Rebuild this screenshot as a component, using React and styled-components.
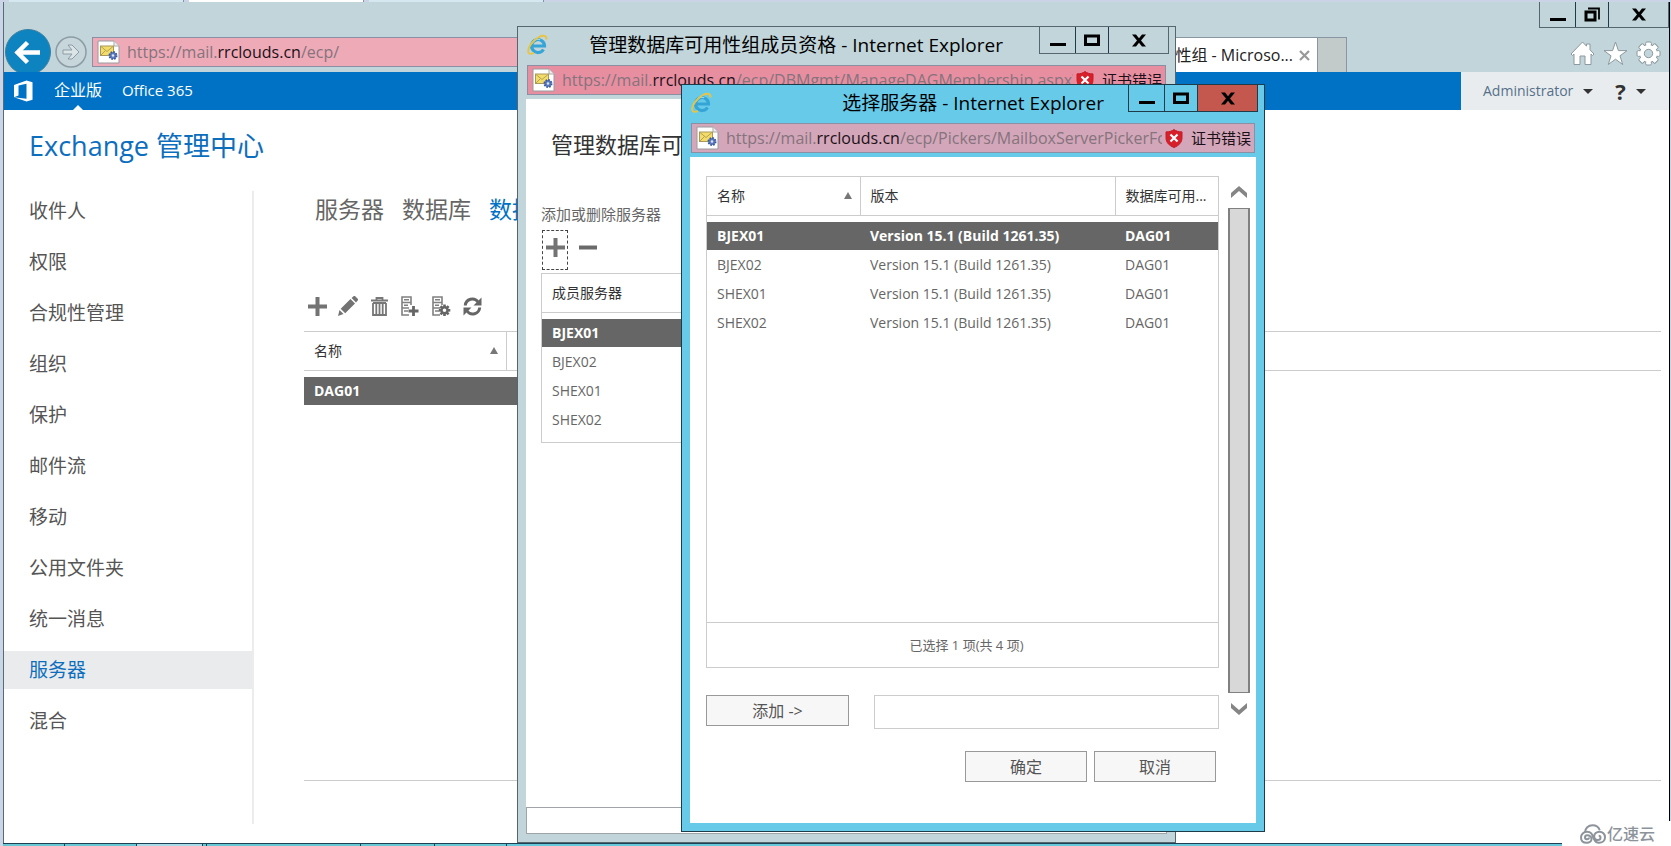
import styled, { createGlobalStyle, css } from "styled-components";

const GlobalStyle = createGlobalStyle`
  * {
    box-sizing: border-box;
  }
  body {
    margin: 0;
    font-family: "Open Sans", "Noto Sans CJK SC", sans-serif;
    color: #666;
    background: #fff;
  }
  button {
    font-family: inherit;
    margin: 0;
    padding: 0;
    border: 0;
    background: none;
    color: inherit;
  }
  svg {
    display: block;
    flex: none;
  }
`;

/* ---------- desktop and main browser window ---------- */

const Desktop = styled.div`
  position: relative;
  display: flex;
  flex-direction: column;
  min-height: 100vh;
  overflow: hidden;
  background: #cbd5e8;
`;
const TopEdge = styled.div`
  display: flex;
  gap: 5px;
  height: 2px;
  padding-left: 9px;
  background: #cbd3e6;
`;
const EdgeTab = styled.div`
  width: 175px;
  background: ${(p) => (p.$active ? "#fff" : "#d5e8f1")};
  border-right: 1px solid #8494a4;
`;
const Browser = styled.div`
  flex: 1;
  display: flex;
  flex-direction: column;
  margin-left: 3px;
  margin-right: 1px;
  border-left: 1px solid #5a6b78;
  border-right: 1px solid #000;
  background: #fff;
`;
const BrowserHead = styled.header`
  display: flex;
  align-items: flex-end;
  height: 70px;
  padding-left: 1px;
  background: #c2d5da;
`;
const BackButton = styled.button`
  width: 46px;
  height: 43px;
  overflow: hidden;
`;
const ForwardButton = styled.button`
  width: 32px;
  height: 32px;
  margin: 0 5px 4px 4px;
`;
const AddressSlot = styled.div`
  flex: 1;
  padding-bottom: 5px;
`;
const Tab = styled.div`
  display: flex;
  align-items: center;
  justify-content: flex-end;
  gap: 6px;
  width: 220px;
  height: 35px;
  padding-right: 7px;
  border-top: 1px solid #8796a0;
  background: #fff;
  color: #222;
  font-size: 16px;
  line-height: 20px;
  white-space: nowrap;
`;
const NewTab = styled.button`
  width: 30px;
  height: 35px;
  border: 1px solid #8796a0;
  border-bottom: 0;
  background: #c3caca;
`;
const HeadRight = styled.div`
  display: flex;
  flex-direction: column;
  align-items: flex-end;
  justify-content: space-between;
  width: 322px;
  height: 70px;
`;
const HeadTools = styled.div`
  display: flex;
  gap: 8px;
  padding: 0 8px 6px 0;
`;

/* ---------- window parts ---------- */

const Controls = styled.div`
  display: flex;
  height: ${(p) => p.$height || 27}px;
  border: 1px solid ${(p) => p.$line};
  border-top: 0;
`;
const ControlButton = styled.button`
  display: flex;
  align-items: center;
  justify-content: center;
  width: ${(p) => p.$width}px;
  background: ${(p) => p.$fill || "transparent"};

  & + & {
    border-left: 1px solid ${(p) => p.$line};
  }
`;
const AddressBar = styled.div`
  display: flex;
  align-items: center;
  height: 30px;
  padding: 0 3px 0 4px;
  border: 1px solid #8b8fa3;
  background: ${(p) => p.$fill};
  white-space: nowrap;
`;
const Url = styled.div`
  flex: 1;
  min-width: 0;
  overflow: hidden;
  margin-left: 7px;
  font-size: 16px;
  line-height: 24px;
  color: #85737d;

  b {
    font-weight: 400;
    color: #1c1018;
  }
`;
const CertError = styled.div`
  display: flex;
  align-items: center;
  gap: 8px;
  margin-left: 3px;
  color: #1c1018;
  font-size: 15px;
  line-height: 20px;
`;

const Popup = styled.section`
  position: absolute;
  left: ${(p) => p.$left}px;
  top: ${(p) => p.$top}px;
  display: flex;
  flex-direction: column;
  width: ${(p) => p.$width}px;
  height: ${(p) => p.$height}px;
  padding: 0 8px 8px;
  border: 1px solid ${(p) => p.$line};
  background: ${(p) => p.$fill};
`;
const PopupHead = styled.header`
  display: flex;
  align-items: flex-start;
  height: 38px;
  padding-right: 6px;
  margin-right: -8px;
`;
const PopupIcon = styled.div`
  padding: 7px 0 0 1px;
`;
const PopupTitle = styled.h2`
  flex: 1;
  margin: 0;
  padding: 5px ${(p) => p.$indent}px 0 0;
  color: #000;
  font-size: 19px;
  font-weight: 400;
  line-height: 26px;
  text-align: right;
  white-space: nowrap;
`;
const PopupAddress = styled.div`
  padding: 0 1px;
`;
const PopupBody = styled.div`
  flex: 1;
  display: flex;
  flex-direction: column;
  margin-top: 4px;
  overflow: hidden;
  background: #fff;
`;

/* ---------- Exchange admin page ---------- */

const SuiteBar = styled.nav`
  display: flex;
  align-items: center;
  height: 38px;
  padding-left: 10px;
  background: #0072c6;
`;
const SuiteLink = styled.a`
  position: relative;
  margin-left: 20px;
  padding-bottom: 2px;
  color: #fff;
  font-size: ${(p) => (p.$latin ? 15 : 16)}px;
  line-height: 36px;
  text-decoration: none;

  ${(p) =>
    p.$active &&
    css`
      &::after {
        content: "";
        position: absolute;
        left: 50%;
        bottom: 0;
        margin-left: -5px;
        border: 5px solid transparent;
        border-top: 0;
        border-bottom-color: #fff;
      }
    `}
`;
const SuiteUser = styled.div`
  display: flex;
  align-items: center;
  gap: 22px;
  width: 208px;
  height: 38px;
  margin-left: auto;
  padding-left: 22px;
  background: #e9ecee;
`;
const UserButton = styled.button`
  display: flex;
  align-items: center;
  gap: 10px;
  color: #55708a;
  font-size: 14px;
  line-height: 20px;
`;
const HelpMark = styled.span`
  color: #333;
  font-size: 22px;
  font-weight: 700;
  line-height: 24px;
`;
const Caret = styled.span`
  border: 5px solid transparent;
  border-top-color: #333;
  border-bottom: 0;
`;
const Page = styled.main`
  flex: 1;
  display: flex;
  flex-direction: column;
`;
const PageTitle = styled.h1`
  margin: 0;
  padding: 18px 0 0 25px;
  color: #0e6ebe;
  font-size: 27px;
  font-weight: 400;
  line-height: 36px;
  white-space: nowrap;
`;
const Columns = styled.div`
  flex: 1;
  display: flex;
  padding: 27px 8px 19px 0;
`;
const SideNav = styled.nav`
  display: flex;
  flex-direction: column;
  gap: 13px;
  width: 250px;
  padding-top: 1px;
  border-right: 2px solid #ececec;
`;
const SideLink = styled.a`
  padding-left: 25px;
  background: ${(p) => (p.$active ? "#e9ebec" : "transparent")};
  color: ${(p) => (p.$active ? "#0e6ebe" : "#555")};
  font-size: 19px;
  line-height: 38px;
  text-decoration: none;
`;
const Content = styled.div`
  flex: 1;
  display: flex;
  flex-direction: column;
  margin: 0 0 43px 50px;
  border-bottom: 1px solid #ccc;
`;
const Pivot = styled.div`
  display: flex;
  gap: 18px;
  padding-left: 11px;
`;
const PivotLink = styled.a`
  color: ${(p) => (p.$active ? "#0072c6" : "#666")};
  font-size: 23px;
  line-height: 36px;
  text-decoration: none;
  white-space: nowrap;
`;
const Toolbar = styled.div`
  display: flex;
  align-items: center;
  gap: 11px;
  height: 40px;
  margin-top: 59px;
  padding-left: 3px;
`;
const IconButton = styled.button`
  display: flex;
  align-items: center;
  justify-content: center;
  width: ${(p) => p.$width || 20}px;
  height: ${(p) => p.$height || 20}px;
`;

/* ---------- lists ---------- */

const Grid = styled.table`
  width: 100%;
  table-layout: fixed;
  border-collapse: collapse;
  text-align: left;
  white-space: nowrap;

  tbody::before {
    content: "";
    display: block;
    height: 6px;
  }
`;
const HeadCell = styled.th`
  width: ${(p) => (p.$width ? `${p.$width}px` : "auto")};
  height: 38px;
  padding: 0 8px 0 10px;
  border-bottom: 1px solid #ccc;
  border-right: ${(p) => (p.$divider ? "1px solid #ccc" : 0)};
  color: #333;
  font-size: 14px;
  font-weight: 400;
  line-height: 20px;
`;
const SortButton = styled.button`
  display: flex;
  align-items: center;
  justify-content: space-between;
  width: 100%;
  font-size: 14px;
  line-height: 20px;

  &::after {
    content: "";
    border: 4px solid transparent;
    border-top: 0;
    border-bottom: 7px solid #777;
  }
`;
const Row = styled.tr`
  color: ${(p) => (p.$selected ? "#fff" : "#666")};
  font-weight: ${(p) => (p.$selected ? 700 : 400)};

  td {
    background: ${(p) => (p.$selected ? "#666" : "transparent")};
    background-clip: padding-box;
  }
  td:empty {
    background: transparent;
  }
`;
const Cell = styled.td`
  height: 29px;
  padding: 0 0 0 10px;
  border-bottom: 1px solid #fff;
  font-size: 14px;
  line-height: 20px;
`;
const MainList = styled.div`
  margin-top: 5px;
  border-top: 1px solid #ccc;
`;

/* ---------- membership popup ---------- */

const FormTitle = styled.h3`
  margin: 27px 0 0 25px;
  color: #333;
  font-size: 22px;
  font-weight: 400;
  line-height: 36px;
  white-space: nowrap;
`;
const FormLabel = styled.div`
  margin: 42px 0 0 15px;
  font-size: 15px;
  line-height: 20px;
`;
const FormTools = styled.div`
  display: flex;
  gap: 7px;
  margin: 6px 0 3px 16px;
`;
const FormTool = styled.button`
  display: flex;
  align-items: flex-start;
  justify-content: center;
  width: 26px;
  height: 40px;
  padding-top: 7px;
  border: 1px dashed ${(p) => (p.$focus ? "#444" : "transparent")};
`;
const MemberList = styled.div`
  height: 170px;
  margin: 0 15px;
  border: 1px solid #ccc;
`;
const StatusBar = styled.div`
  height: 27px;
  margin-top: auto;
  border: 1px solid #a0a4a8;
  background: #fff;
`;

/* ---------- picker popup ---------- */

const PickerLayout = styled.div`
  flex: 1;
  display: flex;
  padding: 19px 6px 0 16px;
`;
const PickerMain = styled.div`
  flex: 1;
  display: flex;
  flex-direction: column;
`;
const PickerList = styled.div`
  display: flex;
  flex-direction: column;
  height: 492px;
  border: 1px solid #ccc;
`;
const PickerCount = styled.div`
  margin-top: auto;
  border-top: 1px solid #ccc;
  padding-left: 8px;
  font-size: 13px;
  line-height: 44px;
  text-align: center;
`;
const AddLine = styled.div`
  display: flex;
  gap: 25px;
  margin-top: 27px;
`;
const Button = styled.button`
  width: ${(p) => p.$width || 122}px;
  height: 31px;
  border: 1px solid #999;
  background: #f7f7f7;
  color: #555;
  font-size: 16px;
  line-height: 20px;
`;
const SelectedInput = styled.input`
  flex: 1;
  min-width: 0;
  height: 34px;
  border: 1px solid #ccc;
  background: #fff;
`;
const Actions = styled.div`
  display: flex;
  justify-content: flex-end;
  gap: 7px;
  margin-top: 22px;
  padding-right: 3px;
`;
const Scroller = styled.div`
  display: flex;
  flex-direction: column;
  align-items: center;
  gap: 10px;
  width: 22px;
  height: 539px;
  margin-left: 9px;
  padding-top: 10px;
`;
const Thumb = styled.div`
  flex: 1;
  width: 22px;
  border: 2px solid #808080;
  border-top-width: 1px;
  border-bottom-width: 1px;
  background: #d8d8d8;
`;

/* ---------- task strip and brand mark ---------- */

const TaskStrip = styled.div`
  display: flex;
  height: 3px;
  margin-left: 3px;
  border-top: 1px solid #1f3f55;
  background: #68c8dc;
`;
const TaskItem = styled.div`
  width: ${(p) => p.$width}px;
  border-right: 1px solid #1f3f55;
  background: ${(p) => (p.$active ? "#a9dbe9" : "#68c8d4")};
`;
const BrandMark = styled.div`
  position: absolute;
  right: 0;
  bottom: 0;
  display: flex;
  align-items: center;
  gap: 1px;
  width: 109px;
  height: 25px;
  padding-left: 18px;
  background: #fff;
  color: #8d939b;
  font-size: 16px;
  font-weight: 500;
  line-height: 24px;
`;

/* ---------- icons ---------- */

const BackIcon = () => (
  <svg width="46" height="46" viewBox="0 0 46 46">
    <circle cx="23" cy="23" r="22.500" fill="#0d84bf" stroke="#3a7f9f" />
    <path d="M35 23.500H13M22.500 13.500L12.500 23.500L22.500 33.500" fill="none" stroke="#fff" strokeWidth="4.500" />
  </svg>
);
const ForwardIcon = () => (
  <svg width="32" height="32" viewBox="0 0 32 32">
    <circle cx="16" cy="16" r="15" fill="#c6d6da" stroke="#8d9ca4" strokeWidth="1.500" />
    <path d="M8 14h9l-4-5h4l7 7-7 7h-4l4-5H8z" fill="#dbe5e8" stroke="#8d9ca4" />
  </svg>
);
const SiteIcon = () => (
  <svg width="23" height="24" viewBox="0 0 23 24">
    <path d="M1 1h16l5 5v17H1z" fill="#fff" stroke="#9a9aa0" />
    <path d="M17 1v5h5" fill="#eee" stroke="#aaa" />
    <rect x="3.500" y="6" width="13" height="9.500" fill="#f3dc6a" stroke="#a8985a" />
    <path d="M4 6.500l6 5 6-5M4 15l4.500-4.500" fill="none" stroke="#b5a352" />
    <circle cx="16" cy="15.500" r="3.600" fill="#5c7abb" stroke="#3a579c" strokeWidth="1.800" strokeDasharray="1.600 1.200" />
    <circle cx="16" cy="15.500" r="1.200" fill="#dfe6f5" />
  </svg>
);
const IeIcon = () => (
  <svg width="21" height="21" viewBox="0 0 21 21">
    <path d="M5 12h12.500A6.500 6.500 0 1 0 16.500 15.500" fill="none" stroke="#35a5d8" strokeWidth="3.200" />
    <path d="M5.200 9.500a6 6 0 0 1 8-3.800" fill="none" stroke="#9bdcf5" strokeWidth="1.200" />
    <path d="M19.500 5.500C19.800 1.500 16 .8 12 3 6 6 1 13 1.200 17.500c.3 3 3.300 2.800 5.800 1.200" fill="none" stroke="#e8c445" strokeWidth="1.900" />
  </svg>
);
const ShieldIcon = () => (
  <svg width="18" height="19" viewBox="0 0 18 19">
    <path d="M9 .5c2 1.600 4.500 2.400 8 2.400v5.600c0 5-3 8-8 10-5-2-8-5-8-10V2.900c3.500 0 6-.8 8-2.400z" fill="#d8202a" stroke="#c41b25" />
    <path d="M5.500 5.500l7 7M12.500 5.500l-7 7" stroke="#fff" strokeWidth="2.200" />
  </svg>
);
const MinIcon = () => (
  <svg width="16" height="14" viewBox="0 0 16 14">
    <path d="M0 11.500h16" stroke="#000" strokeWidth="3" />
  </svg>
);
const MaxIcon = () => (
  <svg width="16" height="13" viewBox="0 0 16 13">
    <rect x="1.500" y="2" width="13" height="8.500" fill="none" stroke="#000" strokeWidth="3" />
  </svg>
);
const RestoreIcon = () => (
  <svg width="17" height="16" viewBox="0 0 17 16">
    <rect x="2" y="5" width="9" height="8" fill="none" stroke="#000" strokeWidth="3" />
    <path d="M4 1.500h11v11" fill="none" stroke="#000" strokeWidth="1.800" />
  </svg>
);
const CloseIcon = () => (
  <svg width="14" height="13" viewBox="0 0 14 13">
    <path d="M0 .5h4l3 3.800L10 .5h4L9 6.500l5 6h-4L7 8.700 4 12.500H0l5-6z" fill="#000" />
  </svg>
);
const TabCloseIcon = () => (
  <svg width="11" height="11" viewBox="0 0 11 11">
    <path d="M1 1l9 9M10 1l-9 9" stroke="#999" strokeWidth="2.200" />
  </svg>
);
const HomeIcon = () => (
  <svg width="25" height="25" viewBox="0 0 25 25">
    <path d="M12.500 1L1 13l1.500 1.500L4 13v10.500h6V15h5v8.500h6V13l1.500 1.500L24 13l-4-4.200V3h-3.500v2.200z" fill="#fff" stroke="#8c999e" />
  </svg>
);
const StarIcon = () => (
  <svg width="25" height="25" viewBox="0 0 25 25">
    <path d="M12.500 1l2.900 8.600H24l-7 5.200 2.700 8.700-7.200-5.300-7.200 5.300L8 14.800 1 9.600h8.600z" fill="#fff" stroke="#8c999e" />
  </svg>
);
const teeth = [0, 45, 90, 135, 180, 225, 270, 315];
const BigGearIcon = () => (
  <svg width="25" height="25" viewBox="0 0 25 25">
    {teeth.map((a) => (
      <rect key={a} x="9.800" y="1" width="5.400" height="6" rx="1" fill="#fff" stroke="#8c999e" transform={`rotate(${a} 12.500 12.500)`} />
    ))}
    <circle cx="12.500" cy="12.500" r="9" fill="#fff" stroke="#8c999e" />
    {teeth.map((a) => (
      <rect key={a} x="10.300" y="2" width="4.400" height="4" fill="#fff" transform={`rotate(${a} 12.500 12.500)`} />
    ))}
    <circle cx="12.500" cy="12.500" r="4.200" fill="#c2d5da" stroke="#8c999e" />
  </svg>
);
const OfficeIcon = () => (
  <svg width="20" height="22" viewBox="0 0 20 22">
    <path d="M0 5L12.500.5 18.500 2.200v17.600L12.500 21.500 0 17.200l12.500 1.500V3.700L4.500 5.600v9.900L0 17.200z" fill="#fff" />
  </svg>
);
const PlusIcon = () => (
  <svg width="19" height="19" viewBox="0 0 19 19">
    <path d="M9.500 0v19M0 9.500h19" stroke="#737373" strokeWidth="4" />
  </svg>
);
const MinusIcon = () => (
  <svg width="18" height="19" viewBox="0 0 18 19">
    <path d="M0 9.500h18" stroke="#6a6a6a" strokeWidth="4" />
  </svg>
);
const PencilIcon = () => (
  <svg width="20" height="20" viewBox="0 0 20 20">
    <path d="M0 20l1.500-6L5.500 18zM2.700 12.700L12.500 3l4.500 4.500L7.200 17.300zM13.600 2L15.500.3c.6-.5 1.200-.4 1.700 0l2.500 2.500c.5.500.5 1.200 0 1.700L18 6.400z" fill="#737373" />
  </svg>
);
const TrashIcon = () => (
  <svg width="17" height="19" viewBox="0 0 17 19">
    <path d="M0 3.500h17M5.500 2.500V1h6v1.500" fill="none" stroke="#777" strokeWidth="1.800" />
    <path d="M2 6v12h13V6M5.300 6v12M8.500 6v12M11.700 6v12M2 6h13" fill="none" stroke="#777" strokeWidth="1.800" />
  </svg>
);
const ServerBase = () => (
  <path d="M8 19H1V1h9v8M1 6.500h9M1 12h7M3 3.700h5M3 9.300h4M3 15h4" fill="none" stroke="#808080" strokeWidth="1.600" />
);
const ServerAddIcon = () => (
  <svg width="18" height="20" viewBox="0 0 18 20">
    <ServerBase />
    <path d="M12.500 10v10M7.500 15h10" stroke="#666" strokeWidth="2.800" />
  </svg>
);
const ServerGearIcon = () => (
  <svg width="19" height="20" viewBox="0 0 19 20">
    <ServerBase />
    {[0, 45, 90, 135].map((a) => (
      <path key={a} d="M12.500 8.500v11.500" stroke="#666" strokeWidth="2.600" transform={`rotate(${a} 12.500 14.300)`} />
    ))}
    <circle cx="12.500" cy="14.300" r="3" fill="#fff" stroke="#666" strokeWidth="2.400" />
  </svg>
);
const RefreshIcon = () => (
  <svg width="19" height="19" viewBox="0 0 19 19">
    <path d="M2.300 8.500A7 7 0 0 1 15 5M16.700 10.500A7 7 0 0 1 4 14" fill="none" stroke="#666" strokeWidth="3" />
    <path d="M18.500.5v8h-8zM.5 18.500v-8h8z" fill="#666" />
  </svg>
);
const Chevron = ({ down }) => (
  <svg width="16" height="12" viewBox="0 0 16 12">
    <path
      d={down ? "M0 0v5l8 7 8-7V0L8 7z" : "M0 12V7l8-7 8 7v5L8 5z"}
      fill="#858585"
    />
  </svg>
);
const CloudIcon = () => (
  <svg width="26" height="20" viewBox="0 0 26 20" fill="none" stroke="#8d939b" strokeWidth="2">
    <path d="M5 8.500C5 4 8.500 1.200 12.500 1.200c3.500 0 6.300 2 7.300 5" />
    <path d="M9 13.500a2 2 0 1 1-2-2.200c3 0 4.500 2 4.500 3.700 0 2.200-2 3.800-4.700 3.800C3 18.800 1 16.500 1 13.500s2.500-5.800 6-5.800c5 0 5.500 4 7 7.500 1 2.500 2.700 3.600 5 3.600 3.500 0 6-2.300 6-5.600 0-3.200-2.500-5.400-5.500-5.400s-5.300 2-5.300 4.500 1.800 3.700 3.500 3.700 2.800-1 2.800-2.200-.8-2-1.800-2" />
  </svg>
);

/* ---------- data ---------- */

const navItems = [
  "收件人",
  "权限",
  "合规性管理",
  "组织",
  "保护",
  "邮件流",
  "移动",
  "公用文件夹",
  "统一消息",
  "服务器",
  "混合",
];
const servers = ["BJEX01", "BJEX02", "SHEX01", "SHEX02"];
const tools = [
  ["新建", PlusIcon],
  ["编辑", PencilIcon],
  ["删除", TrashIcon],
  ["管理成员", ServerAddIcon],
  ["配置", ServerGearIcon],
  ["刷新", RefreshIcon],
];

const WindowControls = ({ line, height, restore, closeFill }) => (
  <Controls $line={line} $height={height}>
    <ControlButton $width={35} $line={line} aria-label="最小化">
      <MinIcon />
    </ControlButton>
    <ControlButton $width={33} $line={line} aria-label="最大化">
      {restore ? <RestoreIcon /> : <MaxIcon />}
    </ControlButton>
    <ControlButton $width={60} $line={line} $fill={closeFill} aria-label="关闭">
      <CloseIcon />
    </ControlButton>
  </Controls>
);

const Address = ({ fill, path, error }) => (
  <AddressBar $fill={fill}>
    <SiteIcon />
    <Url>
      https://mail.<b>rrclouds.cn</b>
      {path}
    </Url>
    {error && (
      <CertError>
        <ShieldIcon />
        证书错误
      </CertError>
    )}
  </AddressBar>
);

const MembershipWindow = () => (
  <Popup $left={517} $top={26} $width={659} $height={817} $line="#55666e" $fill="#c2d5da">
    <PopupHead>
      <PopupIcon>
        <IeIcon />
      </PopupIcon>
      <PopupTitle $indent={36}>管理数据库可用性组成员资格 - Internet Explorer</PopupTitle>
      <WindowControls line="#55666e" />
    </PopupHead>
    <PopupAddress>
      <Address fill="#e78fa0" path="/ecp/DBMgmt/ManageDAGMembership.aspx?" error />
    </PopupAddress>
    <PopupBody>
      <FormTitle>管理数据库可用性组成员资格</FormTitle>
      <FormLabel>添加或删除服务器</FormLabel>
      <FormTools>
        <FormTool $focus aria-label="添加">
          <PlusIcon />
        </FormTool>
        <FormTool aria-label="删除">
          <MinusIcon />
        </FormTool>
      </FormTools>
      <MemberList>
        <Grid>
          <thead>
            <tr>
              <HeadCell>成员服务器</HeadCell>
            </tr>
          </thead>
          <tbody>
            {servers.map((name, i) => (
              <Row key={name} $selected={i === 0}>
                <Cell>{name}</Cell>
              </Row>
            ))}
          </tbody>
        </Grid>
      </MemberList>
      <StatusBar />
    </PopupBody>
  </Popup>
);

const PickerWindow = () => (
  <Popup $left={681} $top={84} $width={584} $height={748} $line="#1d3b48" $fill="#68cae9">
    <PopupHead>
      <PopupIcon>
        <IeIcon />
      </PopupIcon>
      <PopupTitle $indent={24}>选择服务器 - Internet Explorer</PopupTitle>
      <WindowControls line="#1d3b48" closeFill="#c4574e" />
    </PopupHead>
    <PopupAddress>
      <Address fill="#d3a7b9" path="/ecp/Pickers/MailboxServerPickerFc" error />
    </PopupAddress>
    <PopupBody>
      <PickerLayout>
        <PickerMain>
          <PickerList>
            <Grid>
              <thead>
                <tr>
                  <HeadCell $width={153} $divider>
                    <SortButton>名称</SortButton>
                  </HeadCell>
                  <HeadCell $divider>版本</HeadCell>
                  <HeadCell $width={103}>数据库可用...</HeadCell>
                </tr>
              </thead>
              <tbody>
                {servers.map((name, i) => (
                  <Row key={name} $selected={i === 0}>
                    <Cell>{name}</Cell>
                    <Cell>Version 15.1 (Build 1261.35)</Cell>
                    <Cell>DAG01</Cell>
                  </Row>
                ))}
              </tbody>
            </Grid>
            <PickerCount>已选择 1 项(共 4 项)</PickerCount>
          </PickerList>
          <AddLine>
            <Button $width={143}>添加 -&gt;</Button>
            <SelectedInput type="text" aria-label="已选择的服务器" />
          </AddLine>
          <Actions>
            <Button>确定</Button>
            <Button>取消</Button>
          </Actions>
        </PickerMain>
        <Scroller>
          <Chevron />
          <Thumb />
          <Chevron down />
        </Scroller>
      </PickerLayout>
    </PopupBody>
  </Popup>
);

const App = () => {
  return (
    <>
      <GlobalStyle />
      <Desktop>
        <TopEdge>
          <EdgeTab />
          <EdgeTab $active />
          <EdgeTab />
        </TopEdge>
        <Browser>
          <BrowserHead>
            <BackButton aria-label="后退">
              <BackIcon />
            </BackButton>
            <ForwardButton aria-label="前进">
              <ForwardIcon />
            </ForwardButton>
            <AddressSlot>
              <Address fill="#eeabb7" path="/ecp/" />
            </AddressSlot>
            <Tab>
              性组 - Microso...
              <TabCloseIcon />
            </Tab>
            <NewTab aria-label="新建标签页" />
            <HeadRight>
              <WindowControls line="#55666e" height={26} restore />
              <HeadTools>
                <IconButton $width={25} $height={25} aria-label="主页">
                  <HomeIcon />
                </IconButton>
                <IconButton $width={25} $height={25} aria-label="收藏夹">
                  <StarIcon />
                </IconButton>
                <IconButton $width={25} $height={25} aria-label="工具">
                  <BigGearIcon />
                </IconButton>
              </HeadTools>
            </HeadRight>
          </BrowserHead>
          <SuiteBar>
            <OfficeIcon />
            <SuiteLink href="#enterprise" $active>
              企业版
            </SuiteLink>
            <SuiteLink href="#office365" $latin>
              Office 365
            </SuiteLink>
            <SuiteUser>
              <UserButton>
                Administrator
                <Caret />
              </UserButton>
              <UserButton aria-label="帮助">
                <HelpMark>?</HelpMark>
                <Caret />
              </UserButton>
            </SuiteUser>
          </SuiteBar>
          <Page>
            <PageTitle>Exchange 管理中心</PageTitle>
            <Columns>
              <SideNav>
                {navItems.map((item) => (
                  <SideLink key={item} href="#nav" $active={item === "服务器"}>
                    {item}
                  </SideLink>
                ))}
              </SideNav>
              <Content>
                <Pivot>
                  <PivotLink href="#servers">服务器</PivotLink>
                  <PivotLink href="#databases">数据库</PivotLink>
                  <PivotLink href="#dag" $active>
                    数据
                  </PivotLink>
                </Pivot>
                <Toolbar>
                  {tools.map(([label, Icon]) => (
                    <IconButton key={label} aria-label={label}>
                      <Icon />
                    </IconButton>
                  ))}
                </Toolbar>
                <MainList>
                  <Grid>
                    <thead>
                      <tr>
                        <HeadCell $width={202} $divider>
                          <SortButton>名称</SortButton>
                        </HeadCell>
                        <HeadCell $width={400} />
                        <HeadCell />
                      </tr>
                    </thead>
                    <tbody>
                      <Row $selected>
                        <Cell colSpan={2}>DAG01</Cell>
                        <Cell />
                      </Row>
                    </tbody>
                  </Grid>
                </MainList>
              </Content>
            </Columns>
          </Page>
        </Browser>
        <TaskStrip>
          <TaskItem $width={62} />
          <TaskItem $width={72} />
          <TaskItem $width={66} $active />
          <TaskItem $width={4} />
          <TaskItem $width={154} />
          <TaskItem $width={74} />
          <TaskItem $width={72} />
        </TaskStrip>
        <MembershipWindow />
        <PickerWindow />
        <BrandMark>
          <CloudIcon />
          亿速云
        </BrandMark>
      </Desktop>
    </>
  );
};

export default App;
